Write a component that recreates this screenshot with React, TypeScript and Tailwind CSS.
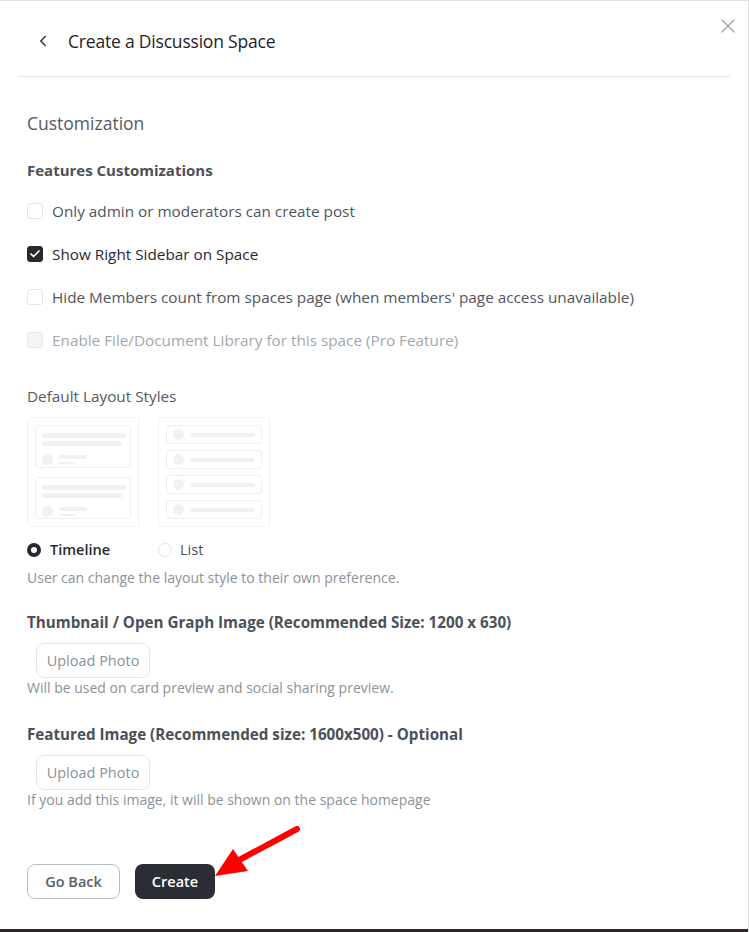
import React, { useState } from 'react';
import { ChevronLeft, X, Check } from 'lucide-react';

type Layout = 'timeline' | 'list';

const features = [
  { label: 'Only admin or moderators can create post', checked: false, disabled: false },
  { label: 'Show Right Sidebar on Space', checked: true, disabled: false },
  { label: "Hide Members count from spaces page (when members' page access unavailable)", checked: false, disabled: false },
  { label: 'Enable File/Document Library for this space (Pro Feature)', checked: false, disabled: true },
];

const Bar: React.FC<{ w: string; h?: string }> = ({ w, h = 'h-[5px]' }) => (
  <div className={`${w} ${h} rounded-full bg-[#f0f1f3]`} />
);

const Avatar = () => <div className="w-[11px] h-[11px] rounded-full bg-[#f0f1f3] shrink-0" />;

const TimelinePreview = () => (
  <div className="w-[112px] h-[110px] rounded-[4px] border border-[#f0f1f3] p-[7px] flex flex-col gap-[9px]">
    {[0, 1].map((i) => (
      <div key={i} className="flex-1 rounded-[3px] border border-[#eeeff1] px-[6px] pt-[7px] flex flex-col gap-[3px]">
        <Bar w="w-[84px]" />
        <Bar w="w-[80px]" />
        <div className="flex items-center gap-[6px] mt-[5px]">
          <Avatar />
          <div className="flex flex-col gap-[3px]">
            <Bar w="w-[28px]" h="h-[4px]" />
            <Bar w="w-[16px]" h="h-[2px]" />
          </div>
        </div>
      </div>
    ))}
  </div>
);

const ListPreview = () => (
  <div className="w-[112px] h-[110px] rounded-[4px] border border-[#f0f1f3] p-[7px] flex flex-col gap-[6px]">
    {[0, 1, 2, 3].map((i) => (
      <div key={i} className="flex-1 rounded-[3px] border border-[#eeeff1] px-[6px] flex items-center gap-[6px]">
        <Avatar />
        <Bar w="w-[68px]" h="h-[4px]" />
      </div>
    ))}
  </div>
);

export default function App() {
  const [layout, setLayout] = useState<Layout>('timeline');
  const [checks, setChecks] = useState(features.map((f) => f.checked));

  return (
    <div className="relative w-[749px] h-[932px] bg-white border-t border-r border-[#dcdfe3] flex flex-col font-['Open_Sans',sans-serif] overflow-hidden">
      {/* header */}
      <div className="relative mx-[18px] h-[76px] border-b border-[#e4e6ea] flex items-center pl-[16px] pt-[5px]">
        <ChevronLeft className="w-[18px] h-[18px] text-[#303338]" strokeWidth={2} />
        <h1 className="ml-[16px] text-[17.5px] font-medium text-[#1f2329] tracking-[-0.2px]">Create a Discussion Space</h1>
      </div>
      <button className="absolute right-[8px] top-[13px] text-[#9ca0a6]">
        <X className="w-[24px] h-[24px]" strokeWidth={1.3} />
      </button>

      <div className="flex-1 px-[27px] pt-[34px] text-[#4b5059]">
        <h2 className="text-[17.5px] font-medium text-[#555a62] leading-[24px]">Customization</h2>

        <h3 className="mt-[24px] text-[15px] font-bold leading-[22px]">Features Customizations</h3>

        <div className="mt-[19px] flex flex-col gap-[21px]">
          {features.map((f, i) => (
            <label key={i} className="flex items-center gap-[9px] h-[22px]">
              <span
                onClick={() => !f.disabled && setChecks(checks.map((c, j) => (j === i ? !c : c)))}
                className={`w-[16px] h-[16px] rounded-[3px] border flex items-center justify-center ${
                  checks[i]
                    ? 'bg-[#262a30] border-[#262a30]'
                    : f.disabled
                      ? 'bg-[#f3f4f6] border-[#e8e9ec]'
                      : 'bg-white border-[#e2e4e8]'
                }`}
              >
                {checks[i] && <Check className="w-[12px] h-[12px] text-white" strokeWidth={3.5} />}
              </span>
              <span
                className={`text-[15.3px] leading-[22px] ${
                  f.disabled ? 'text-[#a3a7ad]' : checks[i] ? 'text-[#262a30]' : 'text-[#50555d]'
                }`}
              >
                {f.label}
              </span>
            </label>
          ))}
        </div>

        <h3 className="mt-[34px] text-[15.3px] font-medium text-[#555a62] leading-[22px]">Default Layout Styles</h3>

        <div className="mt-[10px] flex gap-[19px]">
          <TimelinePreview />
          <ListPreview />
        </div>

        <div className="mt-[12px] flex items-center h-[22px]">
          <button onClick={() => setLayout('timeline')} className="w-[131px] flex items-center gap-[9px]">
            <span
              className={`w-[14px] h-[14px] rounded-full ${
                layout === 'timeline' ? 'border-[4px] border-[#262a30]' : 'border border-[#e2e4e8]'
              }`}
            />
            <span className={`text-[14.5px] ${layout === 'timeline' ? 'font-semibold text-[#262a30]' : 'text-[#4b5059]'}`}>
              Timeline
            </span>
          </button>
          <button onClick={() => setLayout('list')} className="flex items-center gap-[8px]">
            <span
              className={`w-[14px] h-[14px] rounded-full ${
                layout === 'list' ? 'border-[4px] border-[#262a30]' : 'border border-[#e2e4e8]'
              }`}
            />
            <span className={`text-[14.5px] ${layout === 'list' ? 'font-semibold text-[#262a30]' : 'text-[#4b5059]'}`}>
              List
            </span>
          </button>
        </div>
        <p className="mt-[7px] text-[14px] text-[#8d9198] leading-[20px]">
          User can change the layout style to their own preference.
        </p>

        <h3 className="mt-[23px] text-[15.2px] font-bold leading-[22px]">
          Thumbnail / Open Graph Image (Recommended Size: 1200 x 630)
        </h3>
        <button className="mt-[10px] ml-[9px] h-[35px] w-[114px] rounded-[8px] border border-[#e4e6ea] text-[14.5px] text-[#8d9198]">
          Upload Photo
        </button>
        <p className="text-[14px] text-[#8d9198] leading-[20px]">Will be used on card preview and social sharing preview.</p>

        <h3 className="mt-[25px] text-[15.2px] font-bold leading-[22px]">
          Featured Image (Recommended size: 1600x500) - Optional
        </h3>
        <button className="mt-[10px] ml-[9px] h-[35px] w-[114px] rounded-[8px] border border-[#e4e6ea] text-[14.5px] text-[#8d9198]">
          Upload Photo
        </button>
        <p className="text-[14px] text-[#8d9198] leading-[20px]">If you add this image, it will be shown on the space homepage</p>

        <div className="mt-[54px] flex gap-[15px]">
          <button className="h-[35px] w-[93px] rounded-[8px] border border-[#b8bcc2] text-[14.5px] font-semibold text-[#5a5f67]">
            Go Back
          </button>
          <button className="h-[35px] w-[80px] rounded-[8px] bg-[#2a2d34] text-[14.5px] font-semibold text-white">
            Create
          </button>
        </div>
      </div>

      <div className="h-[3px] bg-[#2f2629]" />

      {/* annotation arrow */}
      <svg className="absolute left-[205px] top-[820px]" width="100" height="65" viewBox="0 0 100 65">
        <line x1="92" y1="8" x2="36" y2="38" stroke="#ff0000" strokeWidth="6" strokeLinecap="round" />
        <polygon points="10,55 28,28 43,50" fill="#ff0000" />
      </svg>
    </div>
  );
}
